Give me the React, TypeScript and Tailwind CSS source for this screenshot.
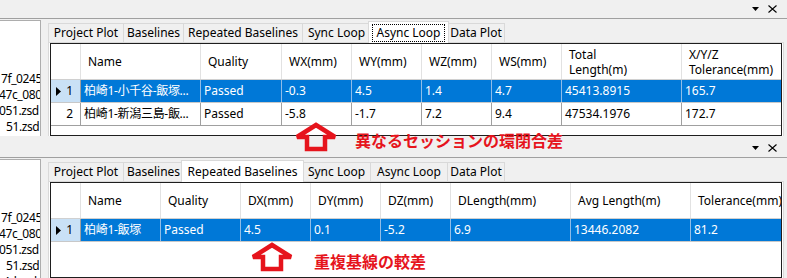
import React from 'react';

const ui = "font-['Noto_Sans','Noto_Sans_CJK_JP',sans-serif]";

const tabs = [
  { name: 'Project Plot', w: 'w-[75px]', ws: 'w-[79px]' },
  { name: 'Baselines', w: 'w-[60px]', ws: 'w-[64px]' },
  { name: 'Repeated Baselines', w: 'w-[119px]', ws: 'w-[123px]' },
  { name: 'Sync Loop', w: 'w-[68px]', ws: 'w-[72px]' },
  { name: 'Async Loop', w: 'w-[77px]', ws: 'w-[81px]' },
  { name: 'Data Plot', w: 'w-[58px]', ws: 'w-[62px]' },
];

type Col = { label: React.ReactNode; w: string };

const loopCols: Col[] = [
  { label: 'Name', w: 'w-[120px]' },
  { label: 'Quality', w: 'w-[81px]' },
  { label: 'WX(mm)', w: 'w-[70px]' },
  { label: 'WY(mm)', w: 'w-[70px]' },
  { label: 'WZ(mm)', w: 'w-[70px]' },
  { label: 'WS(mm)', w: 'w-[70px]' },
  { label: <>Total<br />Length(m)</>, w: 'w-[120px]' },
  { label: <>X/Y/Z<br />Tolerance(mm)</>, w: 'w-[99px]' },
];

const loopRows = [
  ['柏崎1-小千谷-飯塚...', 'Passed', '-0.3', '4.5', '1.4', '4.7', '45413.8915', '165.7'],
  ['柏崎1-新潟三島-飯...', 'Passed', '-5.8', '-1.7', '7.2', '9.4', '47534.1976', '172.7'],
];

const repCols: Col[] = [
  { label: 'Name', w: 'w-[80px]' },
  { label: 'Quality', w: 'w-[80px]' },
  { label: 'DX(mm)', w: 'w-[70px]' },
  { label: 'DY(mm)', w: 'w-[70px]' },
  { label: 'DZ(mm)', w: 'w-[70px]' },
  { label: 'DLength(mm)', w: 'w-[120px]' },
  { label: 'Avg Length(m)', w: 'w-[120px]' },
  { label: 'Tolerance(mm)', w: 'w-[100px]' },
];

const repRows = [['柏崎1-飯塚', 'Passed', '4.5', '0.1', '-5.2', '6.9', '13446.2082', '81.2']];

function TitleBar() {
  return (
    <div className="h-[19px] border-b border-[#a0a0a0] flex items-center justify-end gap-[9px] pr-[10px]">
      <svg width="7" height="4" viewBox="0 0 7 4">
        <polygon points="0,0 7,0 3.5,4" fill="#000" />
      </svg>
      <svg width="9" height="8" viewBox="0 0 9 8">
        <path d="M0.5 0.5 L8.5 7.5 M8.5 0.5 L0.5 7.5" stroke="#000" strokeWidth="1.1" />
      </svg>
    </div>
  );
}

function FileList() {
  return (
    <div className="w-[41px] shrink-0 bg-white border-t border-r border-[#adadad] overflow-hidden text-[12px] leading-[16px] tracking-[-0.4px] text-black pt-[50px]">
      <div className="whitespace-nowrap pl-[1px]">7f_0245.zsd</div>
      <div className="whitespace-nowrap -ml-[1px]">47c_0801.zsd</div>
      <div className="whitespace-nowrap -ml-[1px]">051.zsd</div>
      <div className="whitespace-nowrap pl-[6px]">51.zsd</div>
      <div className="whitespace-nowrap pl-[3px]">4d.zsd</div>
    </div>
  );
}

function TabStrip({ active, focus }: { active: string; focus: boolean }) {
  return (
    <div className="flex items-end h-[22px]">
      {tabs.map((t, i) =>
        t.name === active ? (
          <div
            key={t.name}
            className={`${t.ws} -mx-[2px] -mb-[1px] h-[22px] relative z-10 bg-white border-x border-t border-[#d9d9d9] flex items-start justify-center pt-[2px]`}
          >
            <span className={`px-[3px] leading-[16px] ${focus ? 'border border-dotted border-black' : 'border border-transparent'}`}>
              {t.name}
            </span>
          </div>
        ) : (
          <div
            key={t.name}
            className={`${t.w} h-[19px] bg-[#f0f0f0] border-t border-l border-[#d9d9d9] ${i === tabs.length - 1 ? 'border-r' : ''} flex items-center justify-center leading-[16px]`}
          >
            {t.name}
          </div>
        )
      )}
    </div>
  );
}

function Grid({ cols, rows }: { cols: Col[]; rows: string[][] }) {
  return (
    <div className="w-[732px] h-full bg-white border border-[#1e1e1e] overflow-hidden">
      <div className="flex h-[36px] border-b border-[#d0d0d0]">
        <div className="w-[30px] shrink-0 border-r border-[#e2e2e2]" />
        {cols.map((c, i) => (
          <div
            key={i}
            className={`${c.w} shrink-0 ${i < cols.length - 1 ? 'border-r border-[#e2e2e2]' : ''} flex items-center pl-[7px] leading-[15px] whitespace-nowrap overflow-hidden`}
          >
            <div>{c.label}</div>
          </div>
        ))}
      </div>
      {rows.map((r, ri) => {
        const sel = ri === 0;
        return (
          <div key={ri} className={`flex h-[23px] border-b ${sel ? 'border-[#c8c8c8]' : 'border-[#a0a0a0]'}`}>
            <div
              className={`w-[30px] shrink-0 border-r border-[#a0a0a0] flex items-center justify-end pr-[7px] gap-[5px] ${sel ? 'bg-[#c9e1f6]' : 'bg-white'}`}
            >
              {sel && (
                <svg width="5" height="9" viewBox="0 0 5 9">
                  <polygon points="0,0 5,4.5 0,9" fill="#000" />
                </svg>
              )}
              <span>{ri + 1}</span>
            </div>
            {r.map((v, ci) => (
              <div
                key={ci}
                className={`${cols[ci].w} shrink-0 ${ci < r.length - 1 ? (sel ? 'border-r border-[#8fbde8]' : 'border-r border-[#a0a0a0]') : ''} ${sel ? 'bg-[#0078d7] text-white' : 'text-black'} ${ci === 0 ? 'tracking-[-0.3px]' : ''} flex items-center pl-[3px] whitespace-nowrap overflow-hidden`}
              >
                {v}
              </div>
            ))}
          </div>
        );
      })}
    </div>
  );
}

function Panel({ active, focus, cols, rows, bottom }: { active: string; focus: boolean; cols: Col[]; rows: string[][]; bottom: boolean }) {
  return (
    <div className="h-[139px] flex flex-col overflow-hidden">
      <TitleBar />
      <div className={`flex-1 flex pt-[1px] ${bottom ? '' : 'pb-[3px]'} overflow-hidden`}>
        <FileList />
        <div className="ml-[7px] w-[736px] flex flex-col">
          <TabStrip active={active} focus={focus} />
          <div className="flex-1 border-x border-t border-[#d9d9d9] pl-[1px] bg-white overflow-hidden">
            <Grid cols={cols} rows={rows} />
          </div>
        </div>
      </div>
    </div>
  );
}

function Arrow() {
  return (
    <svg width="46" height="33" viewBox="0 0 46 33" fill="none">
      <polygon
        points="23,5 42,17 32,17 32,29 14,29 14,17 4,17"
        stroke="#e6141c"
        strokeWidth="4.5"
        strokeLinejoin="miter"
        strokeMiterlimit="2.5"
        fill="none"
      />
    </svg>
  );
}

export default function App() {
  return (
    <div className={`relative w-[787px] h-[278px] overflow-hidden bg-[#f0f0f0] text-[12px] text-black ${ui}`}>
      <Panel active="Async Loop" focus cols={loopCols} rows={loopRows} bottom={false} />
      <Panel active="Repeated Baselines" focus={false} cols={repCols} rows={repRows} bottom />

      {/* annotations */}
      <div className="absolute left-[293px] top-[120px]">
        <Arrow />
      </div>
      <div className="absolute left-[355px] top-[132px] text-[16px] leading-[16px] font-bold text-[#e6141c] whitespace-nowrap font-['Noto_Sans_CJK_JP',sans-serif]">
        異なるセッションの環閉合差
      </div>
      <div className="absolute left-[249px] top-[240px]">
        <Arrow />
      </div>
      <div className="absolute left-[314px] top-[253px] text-[16px] leading-[16px] font-bold text-[#e6141c] whitespace-nowrap font-['Noto_Sans_CJK_JP',sans-serif]">
        重複基線の較差
      </div>
    </div>
  );
}
